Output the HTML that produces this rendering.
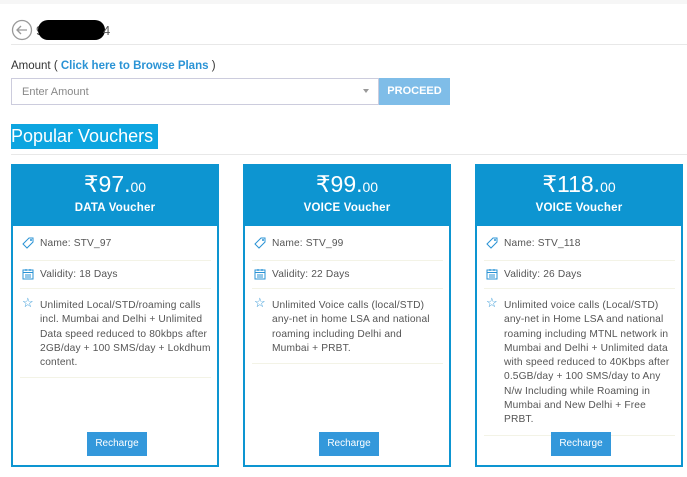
<!DOCTYPE html>
<html><head><style>
*{box-sizing:border-box;margin:0;padding:0}
body{width:687px;height:477px;background:#fff;font-family:"Liberation Sans",Arial,sans-serif;position:relative;overflow:hidden;color:#444}
.a{position:absolute}
.card{position:absolute;top:164px;width:208px;height:303px;border:2px solid #0d95d1;border-top:none}
.hd{background:#0d95d1;height:62px;margin:0 -2px;color:#fff;text-align:center}
.pr{font-size:23px;padding-top:7px;line-height:26px}
.pr small{font-size:14px}
.ty{font-size:11.5px;font-weight:bold;line-height:16px;letter-spacing:.2px}
.row{margin:0 6px 0 7px;border-bottom:1px solid #f3f3e6;font-size:10.2px;letter-spacing:.15px;color:#555;position:relative;padding-left:20px;white-space:nowrap}
.r1{height:35px;line-height:35px}
.r2{height:28px;line-height:27px}
.r3{padding-top:10px;line-height:14.3px;padding-bottom:7px}
.ic{position:absolute;left:2px;top:8px}
.btn{position:absolute;left:74px;top:268px;width:60px;height:24px;background:#3398db;color:#fff;font-size:10px;text-align:center;line-height:24px}
</style></head><body>
<div class="a" style="left:0;top:0;width:687px;height:4px;background:#f6f6f6"></div>
<svg class="a" style="left:11px;top:19px" width="22" height="22" viewBox="0 0 22 22"><circle cx="11" cy="11" r="9.5" fill="none" stroke="#999" stroke-width="1.3"/><path d="M16 11H6M10 7l-4 4 4 4" fill="none" stroke="#999" stroke-width="1.3"/></svg>
<div class="a" style="left:36px;top:23px;font-size:13px;color:#555">9</div>
<div class="a" style="left:38px;top:20px;width:67px;height:20px;background:#000;border-radius:10px"></div>
<div class="a" style="left:103px;top:23px;font-size:13px;color:#555">4</div>
<div class="a" style="left:11px;top:44px;width:676px;height:1px;background:#e8e8e8"></div>
<div class="a" style="left:11px;top:60px;font-size:11.5px;color:#333">Amount ( <b style="color:#2a93d5">Click here to Browse Plans</b> )</div>
<div class="a" style="left:11px;top:78px;width:368px;height:27px;border:1px solid #ccd;font-size:11px;color:#888;padding:7px 10px">Enter Amount<span style="position:absolute;right:9px;top:10px;border:3px solid transparent;border-top:4px solid #999"></span></div>
<div class="a" style="left:379px;top:78px;width:71px;height:27px;background:#7fbde8;color:#fff;font-size:11px;font-weight:bold;text-align:center;line-height:27px">PROCEED</div>
<div class="a" style="left:11px;top:124px;width:147px;height:25px;background:#0da5e0;color:#fff;font-size:18px;line-height:25px;white-space:nowrap;overflow:hidden">Popular Vouchers</div>
<div class="a" style="left:11px;top:154px;width:676px;height:1px;background:#e8e8e8"></div>

<div class="card" style="left:11px"><div class="hd"><div class="pr">₹97.<small>00</small></div><div class="ty">DATA Voucher</div></div>
<div class="row r1"><svg class="ic" style="top:11px" width="12" height="12" viewBox="0 0 12 12"><path d="M1 7L7 1h4v4L5 11z" fill="none" stroke="#2a93d5"/><circle cx="9" cy="3" r="1" fill="#2a93d5"/></svg>Name: STV_97</div>
<div class="row r2"><svg class="ic" style="top:7px" width="12" height="12" viewBox="0 0 12 12"><rect x="1" y="2" width="10" height="9" fill="none" stroke="#2a93d5"/><path d="M1 4.5h10M4 1v2M8 1v2M3 7h6M3 9h6" stroke="#2a93d5"/></svg>Validity: 18 Days</div>
<div class="row r3"><span class="ic" style="color:#2a93d5;font-size:13px;top:7px">☆</span>Unlimited Local/STD/roaming calls<br>incl. Mumbai and Delhi + Unlimited<br>Data speed reduced to 80kbps after<br>2GB/day + 100 SMS/day + Lokdhum<br>content.</div>
<div class="btn">Recharge</div></div>

<div class="card" style="left:243px"><div class="hd"><div class="pr">₹99.<small>00</small></div><div class="ty">VOICE Voucher</div></div>
<div class="row r1"><svg class="ic" style="top:11px" width="12" height="12" viewBox="0 0 12 12"><path d="M1 7L7 1h4v4L5 11z" fill="none" stroke="#2a93d5"/><circle cx="9" cy="3" r="1" fill="#2a93d5"/></svg>Name: STV_99</div>
<div class="row r2"><svg class="ic" style="top:7px" width="12" height="12" viewBox="0 0 12 12"><rect x="1" y="2" width="10" height="9" fill="none" stroke="#2a93d5"/><path d="M1 4.5h10M4 1v2M8 1v2M3 7h6M3 9h6" stroke="#2a93d5"/></svg>Validity: 22 Days</div>
<div class="row r3"><span class="ic" style="color:#2a93d5;font-size:13px;top:7px">☆</span>Unlimited Voice calls (local/STD)<br>any-net in home LSA and national<br>roaming including Delhi and<br>Mumbai + PRBT.</div>
<div class="btn">Recharge</div></div>

<div class="card" style="left:475px"><div class="hd"><div class="pr">₹118.<small>00</small></div><div class="ty">VOICE Voucher</div></div>
<div class="row r1"><svg class="ic" style="top:11px" width="12" height="12" viewBox="0 0 12 12"><path d="M1 7L7 1h4v4L5 11z" fill="none" stroke="#2a93d5"/><circle cx="9" cy="3" r="1" fill="#2a93d5"/></svg>Name: STV_118</div>
<div class="row r2"><svg class="ic" style="top:7px" width="12" height="12" viewBox="0 0 12 12"><rect x="1" y="2" width="10" height="9" fill="none" stroke="#2a93d5"/><path d="M1 4.5h10M4 1v2M8 1v2M3 7h6M3 9h6" stroke="#2a93d5"/></svg>Validity: 26 Days</div>
<div class="row r3"><span class="ic" style="color:#2a93d5;font-size:13px;top:7px">☆</span>Unlimited voice calls (Local/STD)<br>any-net in Home LSA and national<br>roaming including MTNL network in<br>Mumbai and Delhi + Unlimited data<br>with speed reduced to 40Kbps after<br>0.5GB/day + 100 SMS/day to Any<br>N/w Including while Roaming in<br>Mumbai and New Delhi + Free<br>PRBT.</div>
<div class="btn">Recharge</div></div>
</body></html>
